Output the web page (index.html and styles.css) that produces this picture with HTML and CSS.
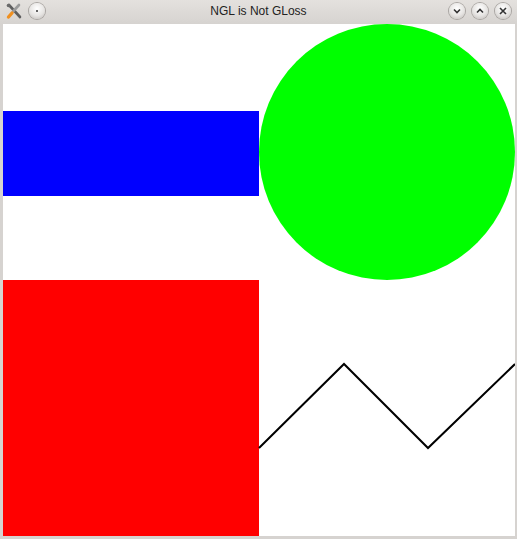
FILE: index.html
```html
<!DOCTYPE html>
<html>
<head>
<meta charset="utf-8">
<link rel="stylesheet" href="styles.css">
</head>
<body>
<div class="window">
  <div class="titlebar">
    <div class="left-btns">
      <svg class="app-icon" width="18" height="18" viewBox="0 0 18 18">
        <path d="M4 3 L15 15" stroke="#5e5e5e" stroke-width="2.6" stroke-linecap="round"/>
        <path d="M14 3 L8 9.5" stroke="#9a9a9a" stroke-width="2.6" stroke-linecap="round"/>
        <path d="M3.5 15 L7 11" stroke="#f09020" stroke-width="3.4" stroke-linecap="round"/>
        <circle cx="3.5" cy="3.5" r="1.8" fill="#6a6a6a"/>
      </svg>
      <span class="btn"><svg width="16" height="16" viewBox="0 0 16 16"><circle cx="8" cy="8" r="1" fill="#333"/></svg></span>
    </div>
    <div class="title">NGL is Not GLoss</div>
    <div class="right-btns">
      <span class="btn"><svg width="16" height="16" viewBox="0 0 16 16"><path d="M5 6.5 L8 9.5 L11 6.5" stroke="#333" stroke-width="1.6" fill="none"/></svg></span>
      <span class="btn"><svg width="16" height="16" viewBox="0 0 16 16"><path d="M5 9.5 L8 6.5 L11 9.5" stroke="#333" stroke-width="1.6" fill="none"/></svg></span>
      <span class="btn"><svg width="16" height="16" viewBox="0 0 16 16"><path d="M5 5 L11 11 M11 5 L5 11" stroke="#333" stroke-width="1.6" fill="none"/></svg></span>
    </div>
  </div>
  <div class="client">
    <svg class="canvas" width="512" height="512" viewBox="0 0 512 512">
      <rect x="0" y="87" width="256" height="85" fill="#0000ff"/>
      <circle cx="384" cy="128" r="128" fill="#00ff00"/>
      <rect x="0" y="256" width="256" height="256" fill="#ff0000"/>
      <polyline points="256,424 341,340 425,424 512,340" fill="none" stroke="#000" stroke-width="2"/>
    </svg>
  </div>
</div>
</body>
</html>
```
FILE: styles.css
```css
html, body {
  margin: 0;
  padding: 0;
  background: #d6d3d0;
}
.window {
  width: 517px;
  height: 539px;
  display: flex;
  flex-direction: column;
  background: #d6d3d0;
  font-family: "Liberation Sans", Arial, sans-serif;
}
.titlebar {
  height: 24px;
  display: flex;
  align-items: center;
  justify-content: space-between;
  padding: 0 6px 0 5px;
  box-sizing: border-box;
  background: linear-gradient(#e4e1de, #d6d3d0);
  position: relative;
}
.left-btns, .right-btns {
  display: flex;
  align-items: center;
  gap: 7px;
  padding-bottom: 2px;
}
.left-btns { gap: 6px; }
.btn {
  width: 16px;
  height: 16px;
  border-radius: 50%;
  background: radial-gradient(circle at 50% 35%, #ffffff, #e6e4e2 55%, #bcb8b5);
  box-shadow: 0 0 0 1px #a9a5a2;
  display: block;
}
.btn svg { display: block; }
.app-icon { display: block; }
.title {
  position: absolute;
  left: 0;
  right: 0;
  top: 4px;
  text-align: center;
  font-size: 12px;
  color: #222;
  pointer-events: none;
}
.client {
  flex: 1;
  padding: 0 2px 3px 3px;
  display: flex;
}
.canvas {
  display: block;
  background: #ffffff;
}
```
